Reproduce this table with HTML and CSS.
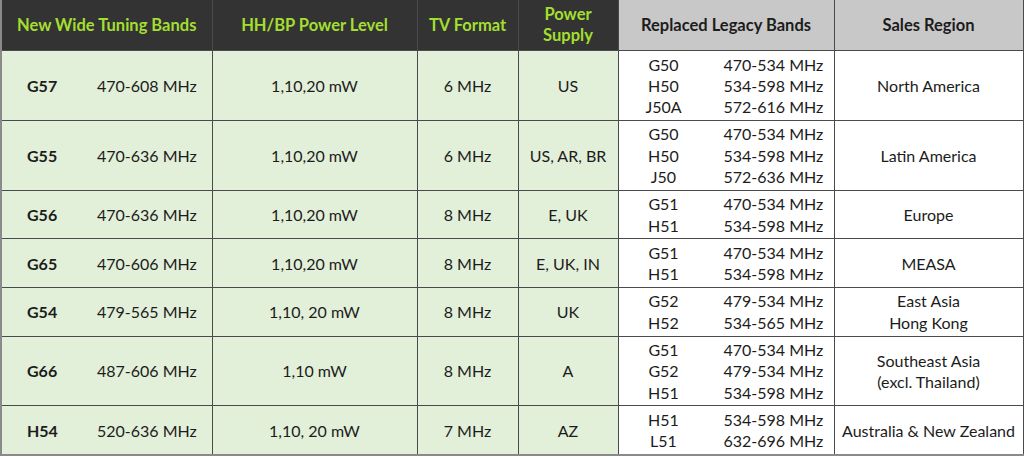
FILE: index.html
```html
<!DOCTYPE html>
<html lang="en">

<head>
    <meta charset="UTF-8">
    <title>Wide Tuning Bands</title>
    <link rel="stylesheet" href="styles.css">
</head>

<body>

    <table class="bands">
        <colgroup>
            <col class="col-band">
            <col class="col-power">
            <col class="col-tv">
            <col class="col-supply">
            <col class="col-legacy">
            <col class="col-region">
        </colgroup>
        <thead>
            <tr>
                <th class="dark">New Wide Tuning Bands</th>
                <th class="dark">HH/BP Power Level</th>
                <th class="dark">TV Format</th>
                <th class="dark">Power<br>Supply</th>
                <th class="light">Replaced Legacy Bands</th>
                <th class="light">Sales Region</th>
            </tr>
        </thead>
        <tbody>
            <tr>
                <td class="green band"><div class="pair"><b>G57</b><span>470-608 MHz</span></div></td>
                <td class="green">1,10,20 mW</td>
                <td class="green">6 MHz</td>
                <td class="green">US</td>
                <td class="legacy"><div class="pair">
                    <span>G50</span><span>470-534 MHz</span>
                    <span>H50</span><span>534-598 MHz</span>
                    <span>J50A</span><span>572-616 MHz</span>
                </div></td>
                <td>North America</td>
            </tr>
            <tr>
                <td class="green band"><div class="pair"><b>G55</b><span>470-636 MHz</span></div></td>
                <td class="green">1,10,20 mW</td>
                <td class="green">6 MHz</td>
                <td class="green">US, AR, BR</td>
                <td class="legacy"><div class="pair">
                    <span>G50</span><span>470-534 MHz</span>
                    <span>H50</span><span>534-598 MHz</span>
                    <span>J50</span><span>572-636 MHz</span>
                </div></td>
                <td>Latin America</td>
            </tr>
            <tr>
                <td class="green band"><div class="pair"><b>G56</b><span>470-636 MHz</span></div></td>
                <td class="green">1,10,20 mW</td>
                <td class="green">8 MHz</td>
                <td class="green">E, UK</td>
                <td class="legacy"><div class="pair">
                    <span>G51</span><span>470-534 MHz</span>
                    <span>H51</span><span>534-598 MHz</span>
                </div></td>
                <td>Europe</td>
            </tr>
            <tr>
                <td class="green band"><div class="pair"><b>G65</b><span>470-606 MHz</span></div></td>
                <td class="green">1,10,20 mW</td>
                <td class="green">8 MHz</td>
                <td class="green">E, UK, IN</td>
                <td class="legacy"><div class="pair">
                    <span>G51</span><span>470-534 MHz</span>
                    <span>H51</span><span>534-598 MHz</span>
                </div></td>
                <td>MEASA</td>
            </tr>
            <tr>
                <td class="green band"><div class="pair"><b>G54</b><span>479-565 MHz</span></div></td>
                <td class="green">1,10, 20 mW</td>
                <td class="green">8 MHz</td>
                <td class="green">UK</td>
                <td class="legacy"><div class="pair">
                    <span>G52</span><span>479-534 MHz</span>
                    <span>H52</span><span>534-565 MHz</span>
                </div></td>
                <td>East Asia<br>Hong Kong</td>
            </tr>
            <tr>
                <td class="green band"><div class="pair"><b>G66</b><span>487-606 MHz</span></div></td>
                <td class="green">1,10 mW</td>
                <td class="green">8 MHz</td>
                <td class="green">A</td>
                <td class="legacy"><div class="pair">
                    <span>G51</span><span>470-534 MHz</span>
                    <span>G52</span><span>479-534 MHz</span>
                    <span>H51</span><span>534-598 MHz</span>
                </div></td>
                <td>Southeast Asia<br>(excl. Thailand)</td>
            </tr>
            <tr>
                <td class="green band"><div class="pair"><b>H54</b><span>520-636 MHz</span></div></td>
                <td class="green">1,10, 20 mW</td>
                <td class="green">7 MHz</td>
                <td class="green">AZ</td>
                <td class="legacy"><div class="pair">
                    <span>H51</span><span>534-598 MHz</span>
                    <span>L51</span><span>632-696 MHz</span>
                </div></td>
                <td>Australia &amp; New Zealand</td>
            </tr>
        </tbody>
    </table>

</body>

</html>
```

FILE: styles.css
```css
/* Global Styles */
body {
    margin: 0;
    background: #fff;
    font-family: Lato, 'Liberation Sans', sans-serif;
    color: #1c1c1c;
}

/* Table */
.bands {
    width: 1022px;
    table-layout: fixed;
    border-collapse: collapse;
    border-left: 2px solid #8a8a8a;
    border-bottom: 2px solid #8a8a8a;
    font-size: 16px;
    line-height: 21.3px;
}

.col-band { width: 211px; }
.col-power { width: 205px; }
.col-tv { width: 101px; }
.col-supply { width: 100px; }
.col-legacy { width: 216px; }
.col-region { width: 189px; }

th, td {
    border: 1px solid #4a4a4a;
    text-align: center;
    vertical-align: middle;
    padding: 2.5px 0;
}

thead th {
    border-top: none;
}

th {
    height: 50px;
    padding: 0;
    font-size: 16.5px;
    font-weight: 700;
    line-height: 21px;
}

th.dark {
    background: #333333;
    color: #a3df31;
}

th.light {
    background: #c8c8c8;
    color: #1c1c1c;
}

td {
    background: #fff;
}

td.green {
    background: #e2efd9;
}

/* Code + frequency pairs */
.pair {
    display: grid;
    grid-template-columns: 70px 1fr;
    text-align: left;
}

.band .pair {
    padding-left: 25px;
}

.band b {
    font-weight: 700;
}

.legacy .pair {
    padding-left: 10px;
    column-gap: 25px;
}

.legacy .pair span:nth-child(odd) {
    text-align: center;
}
```
